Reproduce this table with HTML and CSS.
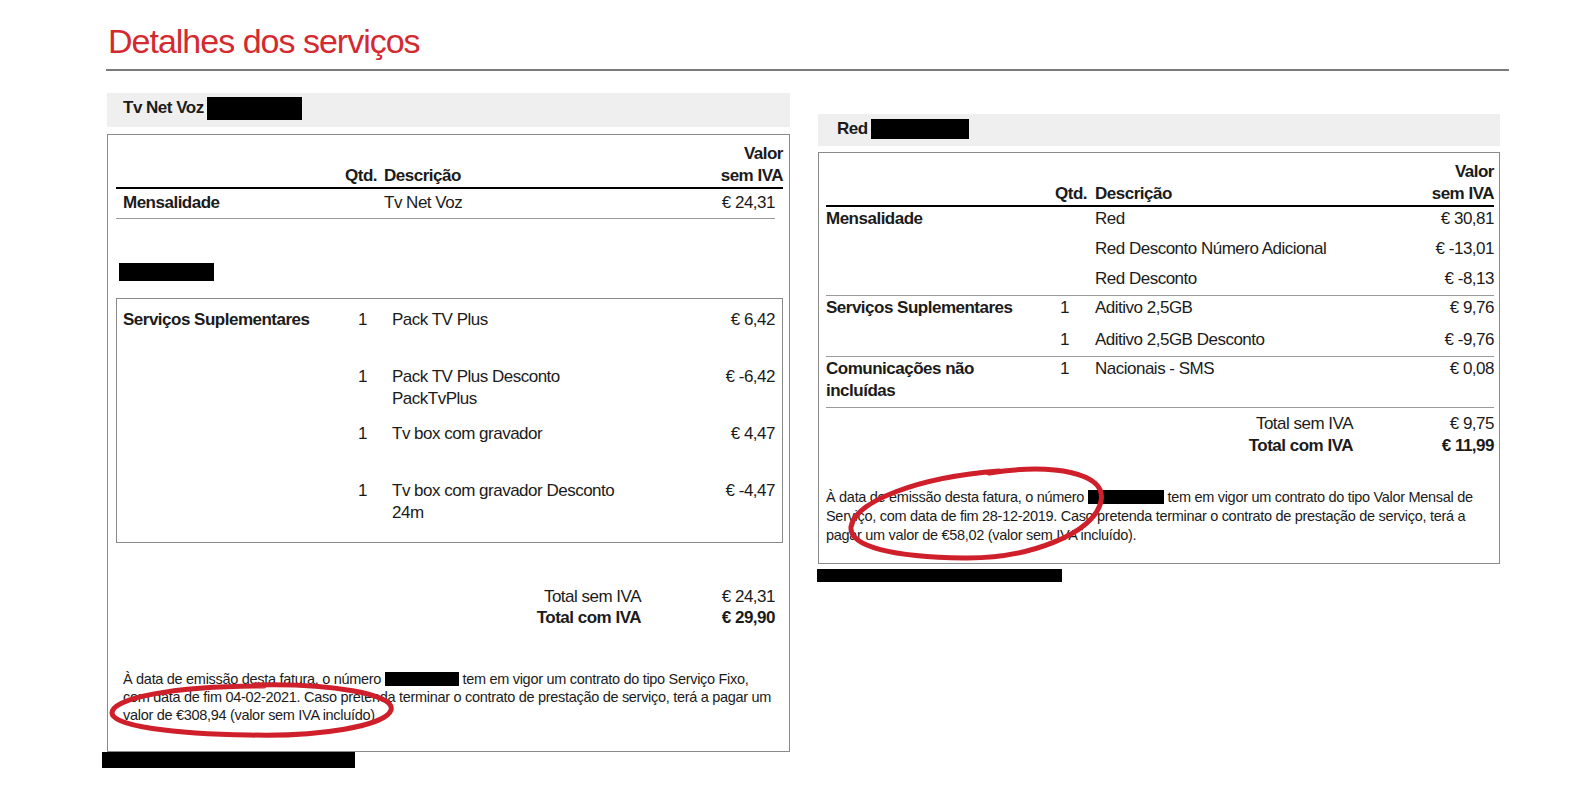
FILE: index.html
```html
<!DOCTYPE html>
<html lang="pt">
<head>
<meta charset="utf-8">
<title>Detalhes dos serviços</title>
<link rel="stylesheet" href="styles.css">
</head>
<body>
<div class="page">
  <h1 class="title">Detalhes dos serviços</h1>
  <div class="title-rule"></div>

  <div class="columns">
    <section class="col col-left">
      <div class="svc-head svc-head-left">Tv Net Voz<span class="redact r-head-left"></span></div>
      <div class="box box-left">
        <div class="grid-left thead thead-left">
          <span class="c-label"></span>
          <span class="c-qty">Qtd.</span>
          <span class="c-desc">Descrição</span>
          <span class="c-val">Valor<br>sem IVA</span>
        </div>
        <div class="grid-left row-mens">
          <span class="c-label b">Mensalidade</span>
          <span class="c-qty"></span>
          <span class="c-desc">Tv Net Voz</span>
          <span class="c-val">€ 24,31</span>
        </div>
        <span class="redact r-sub"></span>
        <div class="subbox">
          <div class="sub-row">
            <span class="c-label b">Serviços Suplementares</span>
            <span class="c-one">1</span>
            <span class="c-desc">Pack TV Plus</span>
            <span class="c-val">€ 6,42</span>
          </div>
          <div class="sub-row">
            <span class="c-label"></span>
            <span class="c-one">1</span>
            <span class="c-desc">Pack TV Plus Desconto<br>PackTvPlus</span>
            <span class="c-val">€ -6,42</span>
          </div>
          <div class="sub-row">
            <span class="c-label"></span>
            <span class="c-one">1</span>
            <span class="c-desc">Tv box com gravador</span>
            <span class="c-val">€ 4,47</span>
          </div>
          <div class="sub-row">
            <span class="c-label"></span>
            <span class="c-one">1</span>
            <span class="c-desc">Tv box com gravador Desconto<br>24m</span>
            <span class="c-val">€ -4,47</span>
          </div>
        </div>
        <div class="totals totals-left">
          <span class="t-label">Total sem IVA</span><span class="t-val">€ 24,31</span>
          <span class="t-label b">Total com IVA</span><span class="t-val b">€ 29,90</span>
        </div>
        <p class="note note-left">À data de emissão desta fatura, o número <span class="redact r-num"></span> tem em vigor um contrato do tipo Serviço Fixo,<br>com data de fim 04-02-2021. Caso pretenda terminar o contrato de prestação de serviço, terá a pagar um<br>valor de €308,94 (valor sem IVA incluído)</p>
        <svg class="circle circle-left" viewBox="0 0 300 66" width="300" height="66" aria-hidden="true">
          <path d="M150 9 C 225 7, 292 18, 287 34 C 282 50, 215 61, 145 59 C 70 58, 8 50, 8 37 C 8 22, 70 10, 160 10" fill="none" stroke="#cf1f2b" stroke-width="5" stroke-linecap="round"/>
        </svg>
      </div>
      <span class="redact r-foot-left"></span>
    </section>

    <section class="col col-right">
      <div class="svc-head svc-head-right">Red<span class="redact r-head-right"></span></div>
      <div class="box box-right">
        <div class="grid-right thead thead-right">
          <span class="c-label"></span>
          <span class="c-qty">Qtd.</span>
          <span class="c-desc">Descrição</span>
          <span class="c-val">Valor<br>sem IVA</span>
        </div>
        <div class="grid-right group">
          <span class="c-label b">Mensalidade</span><span class="c-one"></span><span class="c-desc">Red</span><span class="c-val">€ 30,81</span>
          <span class="c-label"></span><span class="c-one"></span><span class="c-desc">Red Desconto Número Adicional</span><span class="c-val">€ -13,01</span>
          <span class="c-label"></span><span class="c-one"></span><span class="c-desc">Red Desconto</span><span class="c-val">€ -8,13</span>
        </div>
        <div class="grid-right group group-wide">
          <span class="c-label b">Serviços Suplementares</span><span class="c-one">1</span><span class="c-desc">Aditivo 2,5GB</span><span class="c-val">€ 9,76</span>
          <span class="c-label"></span><span class="c-one">1</span><span class="c-desc">Aditivo 2,5GB Desconto</span><span class="c-val">€ -9,76</span>
        </div>
        <div class="grid-right group group-tight">
          <span class="c-label b">Comunicações não<br>incluídas</span><span class="c-one">1</span><span class="c-desc">Nacionais - SMS</span><span class="c-val">€ 0,08</span>
        </div>
        <div class="totals totals-right">
          <span class="t-label">Total sem IVA</span><span class="t-val">€ 9,75</span>
          <span class="t-label b">Total com IVA</span><span class="t-val b">€ 11,99</span>
        </div>
        <p class="note note-right">À data de emissão desta fatura, o número <span class="redact r-num r-num-right"></span> tem em vigor um contrato do tipo Valor Mensal de<br>Serviço, com data de fim 28-12-2019. Caso pretenda terminar o contrato de prestação de serviço, terá a<br>pagar um valor de €58,02 (valor sem IVA incluído).</p>
        <svg class="circle circle-right" viewBox="0 0 280 110" width="280" height="110" aria-hidden="true">
          <path d="M150 12 C 215 2, 268 12, 262 40 C 256 72, 190 98, 125 97 C 55 96, 10 86, 12 66 C 16 40, 80 16, 160 10" fill="none" stroke="#cf1f2b" stroke-width="5" stroke-linecap="round"/>
        </svg>
      </div>
      <span class="redact r-foot-right"></span>
    </section>
  </div>
</div>
</body>
</html>
```
FILE: styles.css
```css
* { box-sizing: border-box; }

html, body {
  margin: 0;
  padding: 0;
  background: #ffffff;
}

body {
  font-family: "Liberation Sans", Arial, sans-serif;
  color: #1b1b1b;
  font-size: 17px;
  letter-spacing: -0.5px;
}

.page {
  padding: 19px 0 0 0;
  width: 1576px;
}

.title {
  margin: 0 0 0 108px;
  font-weight: normal;
  font-size: 34px;
  letter-spacing: -1px;
  line-height: 44px;
  color: #d42a2f;
}

.title-rule {
  margin: 6px 0 0 106px;
  width: 1403px;
  height: 2px;
  background: #7b7b7b;
}

.columns {
  display: flex;
  gap: 28px;
  margin: 22px 0 0 107px;
  align-items: flex-start;
}

.col {
  display: flex;
  flex-direction: column;
}

.col-left { width: 683px; }
.col-right { width: 682px; margin-top: 21px; }

.b { font-weight: bold; }

.redact {
  display: inline-block;
  background: #000;
}

.svc-head {
  display: flex;
  align-items: center;
  background: #efefef;
  font-weight: bold;
}

.svc-head-left {
  height: 34px;
  padding: 0 0 4px 16px;
}

.svc-head-right {
  height: 32px;
  padding: 0 0 3px 19px;
}

.r-head-left { width: 95px; height: 23px; margin-left: 3px; }
.r-head-right { width: 98px; height: 20px; margin-left: 3px; }

.box {
  position: relative;
  border: 1px solid #8a8a8a;
  margin-top: 7px;
}

.box-left {
  padding: 8px 6px 27px 8px;
}

.box-right {
  margin-top: 6px;
  padding: 8px 5px 18px 7px;
}

.thead {
  font-weight: bold;
  line-height: 22px;
  border-bottom: 2px solid #000;
  align-items: end;
}

.grid-left {
  display: grid;
  grid-template-columns: 220px 41px 1fr auto;
}

.grid-right {
  display: grid;
  grid-template-columns: 227px 34px 1fr auto;
}

.c-qty { text-align: right; }
.c-desc { padding-left: 7px; }
.grid-right .c-desc { padding-left: 8px; }
.c-val { text-align: right; }
.c-one { padding-left: 7px; }

.row-mens {
  line-height: 22px;
  padding: 3px 0 4px 0;
  margin-right: 8px;
  border-bottom: 1px solid #9a9a9a;
}

.row-mens .c-label { padding-left: 7px; }

.r-sub {
  display: block;
  width: 95px;
  height: 18px;
  margin: 44px 0 0 3px;
}

.subbox {
  margin-top: 17px;
  border: 1px solid #8a8a8a;
  padding: 10px 7px 5px 6px;
}

.sub-row {
  display: grid;
  grid-template-columns: 235px 34px 1fr auto;
  height: 57px;
  line-height: 22px;
  align-items: start;
}

.sub-row .c-one { padding-left: 0; }
.sub-row .c-desc { padding-left: 0; }

.totals {
  display: grid;
  line-height: 21px;
}

.totals-left {
  grid-template-columns: 1fr 134px;
  margin: 43px 8px 0 0;
}

.totals-right {
  grid-template-columns: 1fr 141px;
  margin-top: 5px;
  line-height: 22px;
}

.t-label, .t-val { text-align: right; }

.note {
  margin: 0;
  font-size: 14.5px;
  letter-spacing: -0.3px;
  white-space: nowrap;
}

.note-left {
  margin: 42px 0 0 7px;
  line-height: 18px;
}

.note-right {
  margin-top: 31px;
  line-height: 19px;
}

.r-num {
  width: 74px;
  height: 14px;
  vertical-align: -2px;
}

.r-num-right {
  width: 76px;
}

.group {
  line-height: 22px;
  row-gap: 8px;
  padding: 1px 0 5px 0;
  border-bottom: 1px solid #9a9a9a;
}

.group-wide { row-gap: 10px; }
.group-tight { row-gap: 0; }

.r-foot-left {
  width: 253px;
  height: 16px;
  margin-left: -5px;
}

.r-foot-right {
  width: 245px;
  height: 13px;
  margin: 5px 0 0 -1px;
}

.circle {
  position: absolute;
  pointer-events: none;
}

.circle-left {
  left: -4px;
  top: 541px;
}

.circle-right {
  left: 20px;
  top: 308px;
}
```
